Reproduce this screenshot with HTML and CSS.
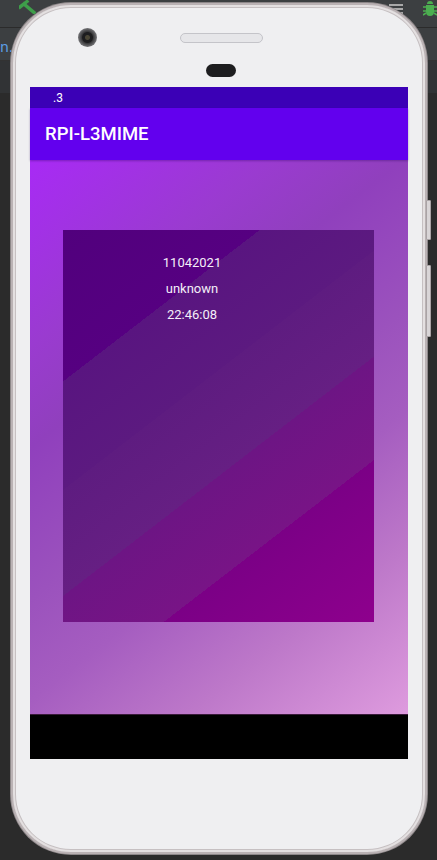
FILE: index.html
```html
<!DOCTYPE html>
<html>
<head>
<meta charset="utf-8">
<link rel="stylesheet" href="styles.css">
</head>
<body>
<div class="ide">
  <div class="ide-toolbar">
    <svg class="hammer" width="20" height="14" viewBox="0 0 20 14"><path d="M1 7 L8 1.5 M5 4 L15 12.5" stroke="#3e9e4a" stroke-width="3.4" fill="none" stroke-linecap="square"/></svg>
    <span class="ide-spacer"></span>
    <svg class="menu" width="14" height="12" viewBox="0 0 14 12"><path d="M0 2h14M0 6h14M0 10h14" stroke="#a8a8a8" stroke-width="2"/></svg>
    <svg class="bug" width="14" height="18" viewBox="0 0 14 18"><path d="M3 5h8v7a4 4 0 0 1-8 0z M4 4a3 3 0 0 1 6 0z" fill="#4caf50"/><path d="M0 7h3M11 7h3M0 11h3M11 11h3M0 15l3-2M14 15l-3-2" stroke="#4caf50" stroke-width="1.6"/></svg>
  </div>
  <div class="ide-tabs"><span class="tab">n.x</span></div>
  <div class="ide-row"></div>
  <div class="ide-editor"></div>
</div>

<div class="phone">
  <div class="hw">
    <span class="camera"></span>
    <span class="speaker"></span>
    <span class="sensor"></span>
  </div>
  <div class="screen">
    <div class="status"><span class="clock">.3</span></div>
    <div class="toolbar"><span class="title">RPI-L3MIME</span></div>
    <div class="content">
      <div class="card">
        <div class="info">
          <span class="line">11042021</span>
          <span class="line">unknown</span>
          <span class="line">22:46:08</span>
        </div>
      </div>
    </div>
    <div class="navbar"></div>
  </div>
  <span class="btn btn-power"></span>
  <span class="btn btn-volume"></span>
</div>
</body>
</html>
```

FILE: styles.css
```css
* { box-sizing: border-box; }

html, body {
  margin: 0;
  padding: 0;
}

body {
  width: 437px;
  height: 860px;
  overflow: hidden;
  position: relative;
  background: #2b2b2b;
  font-family: Roboto, "Noto Sans", sans-serif;
}

.ide {
  display: flex;
  flex-direction: column;
  height: 860px;
}

.ide-toolbar {
  height: 28px;
  background: #3c3f41;
  border-bottom: 1px solid #2b2b2b;
  display: flex;
  align-items: flex-start;
  padding: 0 0 0 19px;
}

.ide-spacer { flex: 1; }

.menu { margin: 3px 20px 0 0; }

.ide-tabs {
  height: 33px;
  background: #3c3f41;
  border-bottom: 1px solid #323232;
  padding: 9px 0 0 0;
}

.tab {
  color: #5c9ee6;
  font-family: "DejaVu Sans", sans-serif;
  font-size: 14px;
}

.ide-row {
  height: 33px;
  background: #313335;
  border-bottom: 1px solid #2b2b2b;
}

.ide-editor {
  flex: 1;
  background: #2b2b2b;
}

/* Phone */
.phone {
  position: absolute;
  left: 11px;
  top: 3px;
  width: 416px;
  height: 851px;
  border-radius: 60px;
  background: #efeff1;
  border: 2px solid #bab2b4;
  box-shadow: inset 0 0 0 2px #e4e0e1, inset 0 0 0 3px #c6c0c2, 0 0 0 1px #8d8789;
  padding: 0 0 0 17px;
  display: flex;
  flex-direction: column;
}

.hw {
  height: 82px;
  position: relative;
  flex: none;
}

.camera {
  position: absolute;
  left: 48px;
  top: 23px;
  width: 19px;
  height: 19px;
  border-radius: 50%;
  background: radial-gradient(circle at 50% 50%, #4a4636 0 2px, #1d1d1f 3px 5px, #3b3b3d 6px, #6d6d70 9px);
}

.speaker {
  position: absolute;
  left: 150px;
  top: 28px;
  width: 83px;
  height: 10px;
  border-radius: 5px;
  background: #e6e6e9;
  border: 1px solid #c4c4c9;
}

.sensor {
  position: absolute;
  left: 176px;
  top: 59px;
  width: 30px;
  height: 13px;
  border-radius: 7px;
  background: #1d1d1f;
}

.screen {
  width: 378px;
  height: 672px;
  display: flex;
  flex-direction: column;
  flex: none;
}

.status {
  height: 21px;
  background: #3b00b6;
  display: flex;
  align-items: center;
  padding-left: 23px;
}

.clock {
  color: #fff;
  font-size: 12px;
}

.toolbar {
  height: 52px;
  background: #6200ee;
  display: flex;
  align-items: center;
  padding: 0 0 1px 15px;
  position: relative;
  z-index: 1;
  box-shadow: 0 1px 2px rgba(40, 0, 90, 0.35);
}

.title {
  color: #fff;
  font-size: 18.5px;
  font-weight: 500;
}

.content {
  height: 554px;
  padding: 70px 34px 0 33px;
  background: linear-gradient(142.4deg, #a82af5 0%, #9a3bd0 22%, #9040bd 34%, #9b52bd 52%, #a55dc0 64%, #bd78c9 80%, #de9bde 100%);
}

.card {
  height: 392px;
  padding: 20px 53px 0 0;
  background: linear-gradient(142.4deg,
    #51007d 0px, #560081 120px,
    #591580 120px, #5c1a80 206px,
    #5e1c80 206px, #661f83 290px,
    #6d1584 290px, #781486 372px,
    #7b0086 372px, #8e008d 100%);
}

.info {
  display: flex;
  flex-direction: column;
  align-items: center;
}

.line {
  color: #f4eef8;
  font-size: 13px;
  line-height: 26px;
}

.navbar {
  height: 45px;
  background: #000;
  border-top: 1px solid #3a1a3a;
}

.btn {
  position: absolute;
  right: -6px;
  width: 5px;
  background: #d9d5d7;
  border: 1px solid #a9a3a5;
  border-radius: 1px;
}

.btn-power { top: 195px; height: 40px; }
.btn-volume { top: 260px; height: 72px; }
```
